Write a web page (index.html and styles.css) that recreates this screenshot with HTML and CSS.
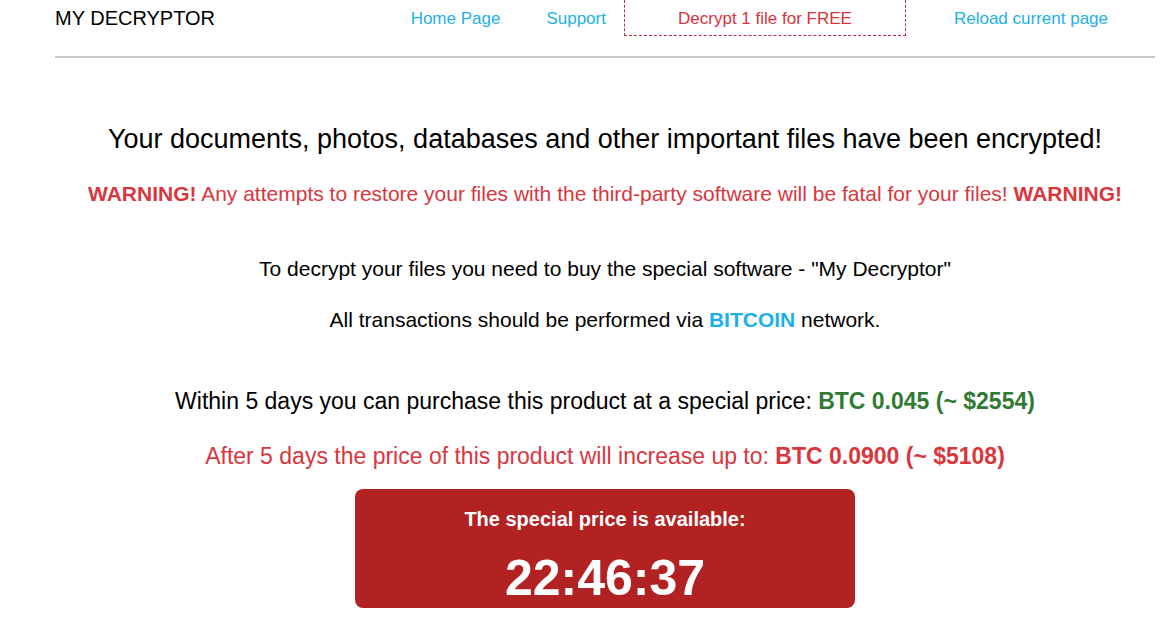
FILE: index.html
```html
<!DOCTYPE html>
<html lang="en">
<head>
<meta charset="utf-8">
<title>My Decryptor</title>
<link rel="stylesheet" href="styles.css">
</head>
<body>
<div class="page">
  <header class="header">
    <div class="brand">MY DECRYPTOR</div>
    <nav class="nav">
      <a class="nav-link home" href="#">Home Page</a>
      <a class="nav-link support" href="#">Support</a>
      <a class="nav-free" href="#">Decrypt 1 file for FREE</a>
      <a class="nav-link reload" href="#">Reload current page</a>
    </nav>
  </header>
  <main class="main">
    <h1 class="headline">Your documents, photos, databases and other important files have been encrypted!</h1>
    <p class="warning"><b>WARNING!</b> Any attempts to restore your files with the third-party software will be fatal for your files! <b>WARNING!</b></p>
    <p class="info first">To decrypt your files you need to buy the special software - "My Decryptor"</p>
    <p class="info second">All transactions should be performed via <b class="btc">BITCOIN</b> network.</p>
    <p class="price">Within 5 days you can purchase this product at a special price: <b class="green">BTC 0.045 (~ $2554)</b></p>
    <p class="price later">After 5 days the price of this product will increase up to: <b>BTC 0.0900 (~ $5108)</b></p>
    <div class="timer-box">
      <div class="timer-label">The special price is available:</div>
      <div class="timer">22:46:37</div>
    </div>
  </main>
</div>
</body>
</html>
```
FILE: styles.css
```css
html, body {
  margin: 0;
  padding: 0;
  background: #ffffff;
}
body {
  font-family: "Liberation Sans", Arial, sans-serif;
  color: #000;
}
.page {
  width: 1100px;
  margin-left: 55px;
}
.header {
  display: flex;
  align-items: flex-start;
  justify-content: space-between;
  height: 56px;
  border-bottom: 2px solid #c8c8c8;
}
.brand {
  font-size: 20px;
  line-height: 36px;
  color: #000;
}
.nav {
  display: flex;
  align-items: stretch;
  height: 36px;
  padding-right: 47px;
}
.nav a {
  text-decoration: none;
  font-size: 17px;
  line-height: 37px;
}
.nav-link {
  color: #1eb1e6;
}
.support { margin-left: 46px; }
.nav-free {
  margin-left: 18px;
  width: 282px;
  box-sizing: border-box;
  text-align: center;
  color: #d7343c;
  border: 1px dashed #b4303f;
  border-top: none;
  height: 36px;
}
.reload { margin-left: 48px; }

.main {
  text-align: center;
}
.headline {
  margin: 66px 0 0;
  font-size: 27px;
  line-height: 30px;
  font-weight: normal;
  color: #000;
}
.warning {
  margin: 28px 0 0;
  font-size: 21px;
  line-height: 24px;
  color: #d9363e;
}
.info {
  font-size: 21px;
  line-height: 22px;
  margin: 0;
}
.info.first { margin-top: 52px; }
.info.second { margin-top: 29px; }
.btc { color: #1bb0ea; }
.price {
  font-size: 23px;
  line-height: 26px;
  margin: 57px 0 0;
}
.green { color: #2f7a33; }
.price.later {
  margin-top: 29px;
  color: #d9363e;
}
.timer-box {
  width: 500px;
  height: 119px;
  box-sizing: border-box;
  margin: 20px auto 0;
  background: #b22222;
  border-radius: 8px;
  color: #fff;
  padding-top: 18px;
}
.timer-label {
  font-size: 20px;
  line-height: 24px;
  font-weight: bold;
}
.timer {
  margin-top: 19px;
  font-size: 50px;
  line-height: 56px;
  font-weight: bold;
}
```
